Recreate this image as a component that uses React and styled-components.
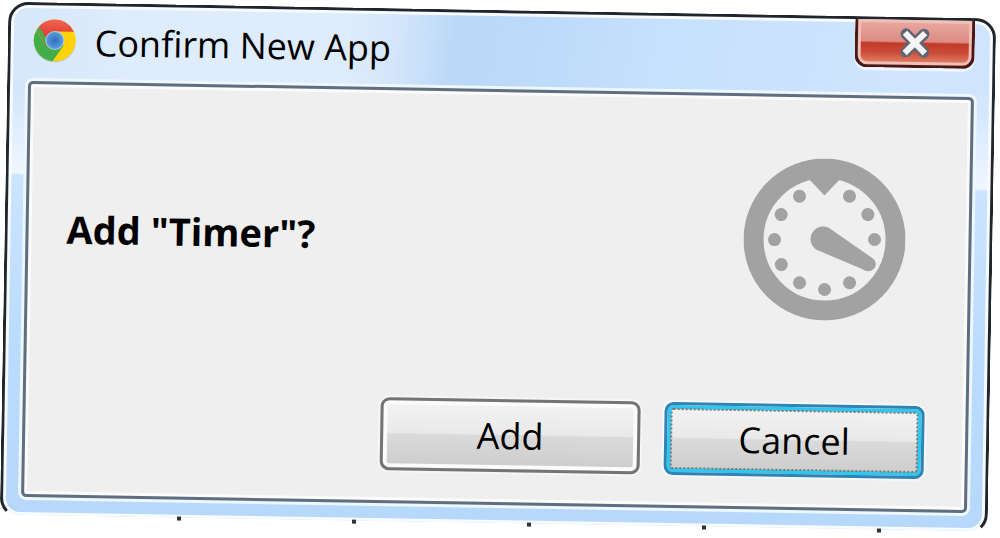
import React from "react";
import styled, { createGlobalStyle, css } from "styled-components";

const GlobalStyle = createGlobalStyle`
  * { box-sizing: border-box; }
  body {
    margin: 0;
    background: #fff;
    color: #000;
    font-family: "Open Sans", "Noto Sans", sans-serif;
    overflow: hidden;
  }
`;

const Page = styled.main`
  padding: 10px 8px 14px 4px;
`;

const Window = styled.section`
  display: flex;
  flex-direction: column;
  padding: 0 18px 18px;
  border: 3px solid #20262c;
  border-bottom-color: transparent;
  border-radius: 20px;
  background:
    linear-gradient(90deg, #d5e7fb 0, #dfecfb 120px, #dfecfb 320px, transparent 450px) 0 0 / 100% 75px no-repeat,
    linear-gradient(100deg, transparent 340px, #b9d7f8 440px, #bddafa 520px, #c6e0fd 640px, #d0e5fd 900px) 0 0 / 100% 75px no-repeat,
    linear-gradient(180deg, #d0e5fd 0, #d4e7fd 90px, #f0f6ff 168px, #cce4fe 170px, #bbdcfe 330px, #b6d8fa 100%);
  background-clip: padding-box;
  box-shadow: inset 0 0 0 3px #f7fbff;
  transform: rotate(0.97deg);
`;

const TitleBar = styled.header`
  display: flex;
  align-items: flex-start;
  height: 76px;
`;

const TitleLabel = styled.div`
  display: flex;
  flex: 1;
  align-items: center;
  gap: 18px;
  height: 70px;
  padding: 0 0 0 4px;
`;

const Title = styled.h1`
  margin: 0;
  padding-top: 4px;
  font-size: 36px;
  line-height: 48px;
  font-weight: 400;
  white-space: nowrap;
`;

const CloseButton = styled.button`
  display: flex;
  align-items: center;
  justify-content: center;
  width: 120px;
  height: 48px;
  padding: 0;
  border: 3px solid #4b1713;
  border-top: 0;
  border-radius: 0 0 12px 12px;
  background: linear-gradient(#e9aaa3 0, #dc8c83 48%, #c03a28 52%, #cb4b36 72%, #e58a70 100%);
  box-shadow: inset 0 0 0 3px #f0bfb8, 0 3px 0 0 #edf5ff;
`;

const Panel = styled.div`
  padding: 61px 41px 30px 38px;
  border: 3px solid #5f6f80;
  border-radius: 5px;
  background: #efefef;
  box-shadow: inset 0 0 0 3px #fbfbfb, 0 0 0 3px #eef6ff;
`;

const Prompt = styled.div`
  display: flex;
  align-items: center;
  justify-content: space-between;
  padding-right: 22px;
`;

const Question = styled.p`
  margin: 0;
  padding-top: 4px;
  font-size: 38px;
  line-height: 56px;
  font-weight: 700;
`;

const Actions = styled.div`
  display: flex;
  justify-content: flex-end;
  gap: 24px;
  margin-top: 84px;
`;

const ActionButton = styled.button`
  width: 260px;
  height: 73px;
  padding: 0;
  border: 3px solid #747474;
  border-radius: 9px;
  background: linear-gradient(#f3f3f3 0, #e9e9e9 48%, #dadada 50%, #cccccc 100%);
  box-shadow: inset 0 0 0 4px #fbfbfb, 0 0 0 2px #f6f6f6;
  color: #000;
  font: 400 36px / 48px "Open Sans", "Noto Sans", sans-serif;

  ${(p) =>
    p.$focused &&
    css`
      border-color: #2f83b5;
      box-shadow: inset 0 0 0 4px #2fc6f0, 0 0 0 2px #f4f8fa;
      outline: 2px dotted #8d7468;
      outline-offset: -8px;
    `}
`;

const EdgeMarks = styled.div`
  position: absolute;
  left: 174px;
  right: 80px;
  bottom: -3px;
  height: 4px;
  background: repeating-linear-gradient(90deg, #303438 0 4px, transparent 4px 175px);
`;

function ChromeLogo() {
  return (
    <svg width="44" height="44" viewBox="0 0 44 44" aria-hidden="true">
      <defs>
        <linearGradient id="red" x1="0" y1="0" x2="0" y2="1">
          <stop offset="0" stopColor="#ef6551" />
          <stop offset="1" stopColor="#d81f20" />
        </linearGradient>
        <radialGradient id="blue">
          <stop offset="0" stopColor="#2f6fb8" />
          <stop offset="1" stopColor="#5b9ade" />
        </radialGradient>
      </defs>
      <circle cx="22" cy="23" r="21" fill="#8fa2ad" opacity="0.5" />
      <circle cx="22" cy="22" r="21" fill="#ffd20a" />
      <path d="M22 22 L12.5 27.5 L3.6 11.8 A21 21 0 0 0 20 42.9 L31 27 Z" fill="#43ae49" />
      <path d="M3.8 11.5 A21 21 0 0 1 40.2 11.8 L41 13 H22 L13 28 Z" fill="url(#red)" />
      <path d="M3.8 11.5 L13.2 27.5 L22 22 L13 19 L6.5 9 Z" fill="#43ae49" />
      <circle cx="22" cy="22" r="9.5" fill="#a9cbe8" />
      <circle cx="22" cy="22" r="8.5" fill="url(#blue)" />
    </svg>
  );
}

function CloseGlyph() {
  return (
    <svg width="34" height="30" viewBox="0 0 34 30" aria-hidden="true">
      <path d="M8 6 L26 24 M26 6 L8 24" stroke="#626674" strokeWidth="11" strokeLinecap="round" />
      <path d="M9 7 L25 23 M25 7 L9 23" stroke="#f4f4f4" strokeWidth="6" strokeLinecap="square" />
    </svg>
  );
}

const DOT_ANGLES = [30, 60, 90, 120, 150, 180, 210, 240, 270, 300, 330];

function TimerIcon() {
  return (
    <svg width="162" height="162" viewBox="0 0 162 162" role="img" aria-label="Timer">
      <g transform="rotate(-1 81 81)" fill="#a2a2a2">
        <circle cx="81" cy="81" r="71" fill="none" stroke="#a2a2a2" strokeWidth="20" />
        <path d="M60 15 H102 L81 37 Z" />
        {DOT_ANGLES.map((deg) => (
          <circle key={deg} cx="81" cy="31" r="6.5" transform={`rotate(${deg} 81 81)`} />
        ))}
        <path d="M87 70.5 L128 99 A7 7 0 0 1 122 112 L76 92.5 A12.5 12.5 0 1 1 87 70.5 Z" />
      </g>
    </svg>
  );
}

export default function App() {
  return (
    <>
      <GlobalStyle />
      <Page>
        <Window role="dialog" aria-labelledby="dialog-title">
          <TitleBar>
            <TitleLabel>
              <ChromeLogo />
              <Title id="dialog-title">Confirm New App</Title>
            </TitleLabel>
            <CloseButton type="button" aria-label="Close">
              <CloseGlyph />
            </CloseButton>
          </TitleBar>
          <Panel>
            <Prompt>
              <Question>Add "Timer"?</Question>
              <TimerIcon />
            </Prompt>
            <Actions>
              <ActionButton type="button">Add</ActionButton>
              <ActionButton type="button" $focused>
                Cancel
              </ActionButton>
            </Actions>
          </Panel>
          <EdgeMarks />
        </Window>
      </Page>
    </>
  );
}
